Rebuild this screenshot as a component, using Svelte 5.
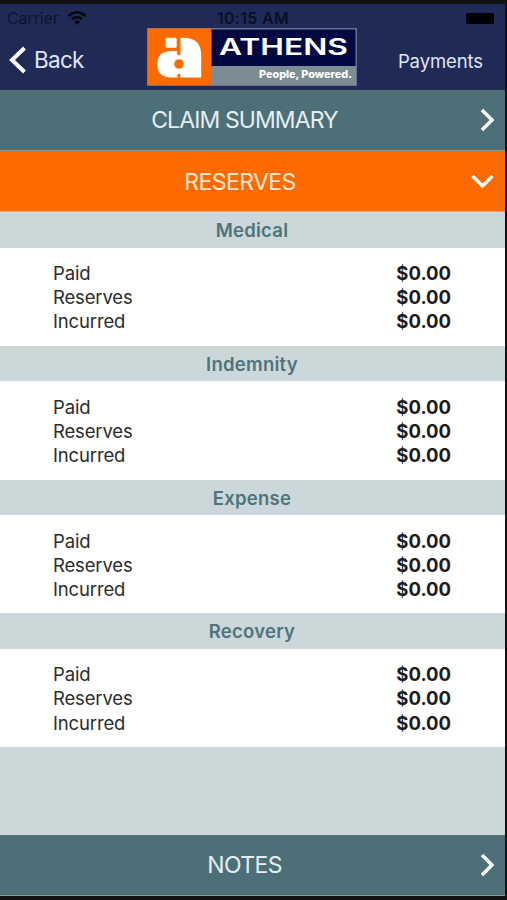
<script>
  const sections = ['Medical', 'Indemnity', 'Expense', 'Recovery'].map(title => ({
    title,
    rows: [
      { label: 'Paid', amount: 0 },
      { label: 'Reserves', amount: 0 },
      { label: 'Incurred', amount: 0 }
    ]
  }));

  let reservesOpen = $state(true);

  function money(value) {
    return '$' + value.toFixed(2);
  }
</script>

{#snippet chevronRight()}
  <svg class="chevron" width="14" height="24" viewBox="0 0 14 24">
    <path d="M2 2 L12 12 L2 22" />
  </svg>
{/snippet}

{#snippet chevronDown()}
  <svg class="chevron" width="23" height="14" viewBox="0 0 23 14">
    <path d="M1.5 2 L11.5 12 L21.5 2" />
  </svg>
{/snippet}

<div class="phone">
  <header>
    <div class="status">
      <div class="carrier">
        <span>Carrier</span>
        <svg width="20" height="14" viewBox="0 0 20 14">
          <path d="M1.5 5 Q10 -2.5 18.5 5" />
          <path d="M4.8 8.3 Q10 3.8 15.2 8.3" />
          <path class="dot" d="M7 10.8 Q10 8.3 13 10.8 L10 14 Z" />
        </svg>
      </div>
      <span class="time">10:15 AM</span>
      <span class="battery"></span>
    </div>

    <nav>
      <button class="back">
        <svg width="18" height="28" viewBox="0 0 18 28">
          <path d="M15.5 2 L3 14 L15.5 26" />
        </svg>
        <span>Back</span>
      </button>

      <svg class="logo" width="210" height="58" viewBox="0 0 210 58">
        <rect width="210" height="58" fill="#66718c" />
        <rect x="64" y="1.5" width="144.5" height="37" fill="#020840" />
        <rect x="64" y="38" width="145" height="19" fill="#7b8c94" />
        <rect x="0.5" y="0.5" width="64" height="56.5" fill="#fd6b00" />
        <rect x="18.7" y="9.7" width="11" height="10" rx="1.5" fill="#fff" />
        <path
          d="M33.5 9.7 H38 Q54 10.5 54.2 27 V49.5 H33.3 V46 H30.5 V49.5 H23 Q10.3 48.5 10.3 36.2 Q10.3 24 23 23 H30.2 V27 H33.5 Z"
        />
        <circle cx="32" cy="36" r="4.8" fill="#fd6b00" />
        <text class="brand" x="72" y="27" textLength="129" lengthAdjust="spacingAndGlyphs">ATHENS</text>
        <text class="tagline" x="112" y="50" textLength="93" lengthAdjust="spacingAndGlyphs">People, Powered.</text>
      </svg>

      <button class="payments">Payments</button>
    </nav>
  </header>

  <button class="bar">
    <span class="wide">CLAIM SUMMARY</span>
    {@render chevronRight()}
  </button>

  <button class="bar active" onclick={() => (reservesOpen = !reservesOpen)}>
    <span>RESERVES</span>
    {#if reservesOpen}
      {@render chevronDown()}
    {:else}
      {@render chevronRight()}
    {/if}
  </button>

  <main>
    {#if reservesOpen}
      {#each sections as section}
        <section>
          <h2>{section.title}</h2>
          <div class="rows">
            {#each section.rows as row}
              <div class="row">
                <span>{row.label}</span>
                <strong>{money(row.amount)}</strong>
              </div>
            {/each}
          </div>
        </section>
      {/each}
    {/if}
  </main>

  <button class="bar notes">
    <span>NOTES</span>
    {@render chevronRight()}
  </button>
</div>

<style>
  :global(body) {
    margin: 0;
    background: #111214;
  }

  .phone {
    box-sizing: border-box;
    width: 507px;
    height: 900px;
    padding: 4px 2px 4px 0;
    display: flex;
    flex-direction: column;
    background: #111214;
    font-family: Inter, 'Liberation Sans', sans-serif;
  }

  button {
    padding: 0;
    border: 0;
    background: none;
    color: inherit;
    font: inherit;
    cursor: pointer;
  }

  path {
    fill: none;
    stroke: #fff;
  }

  header {
    height: 86px;
    flex: none;
    background: #202a57;
    color: #dfe5f3;
  }

  .status {
    display: grid;
    grid-template-columns: 1fr auto 1fr;
    align-items: center;
    height: 24px;
    padding: 4px 11px 0 7px;
    box-sizing: border-box;
    color: #0e1434;
    font-size: 16px;
  }

  .carrier {
    display: flex;
    align-items: center;
    gap: 8px;
    letter-spacing: -0.1px;
  }

  .carrier path {
    stroke: #05070f;
    stroke-width: 2.6;
  }

  .carrier .dot {
    fill: #05070f;
    stroke: none;
  }

  .time {
    padding-left: 5px;
    color: #0a0f28;
    font-weight: 600;
    letter-spacing: 0.3px;
  }

  .battery {
    justify-self: end;
    width: 28px;
    height: 11px;
    border-radius: 2px;
    background: #000;
  }

  nav {
    display: grid;
    grid-template-columns: 147px 210px 1fr;
    align-items: start;
  }

  .back {
    display: flex;
    align-items: center;
    gap: 7px;
    padding: 16.5px 0 0 9px;
    font-size: 22.5px;
    letter-spacing: -0.7px;
    line-height: 30px;
  }

  .back path {
    stroke-width: 4;
  }

  .payments {
    justify-self: end;
    padding: 18px 22px 0 0;
    font-size: 18.5px;
    letter-spacing: -0.1px;
    line-height: 31px;
  }

  .logo path {
    stroke: none;
    fill: #fff;
  }

  .brand {
    fill: #fff;
    font-size: 22.5px;
    font-weight: 600;
  }

  .tagline {
    fill: #fff;
    font-size: 10.5px;
    font-weight: 800;
  }

  .bar {
    display: flex;
    align-items: center;
    flex: none;
    box-sizing: border-box;
    width: 100%;
    height: 61px;
    padding: 0 11px 0 9px;
    border-bottom: 1px solid #8c9896;
    background: #4d6f78;
    color: #e4eef3;
    font-size: 23px;
  }

  .bar span {
    flex: 1;
    letter-spacing: -0.6px;
    text-align: center;
  }

  .bar .wide {
    letter-spacing: -0.9px;
  }

  .bar.active {
    background: #fd6b00;
    border-bottom-color: #e8a06c;
    color: #ffe6d0;
  }

  .bar.active span {
    padding-top: 2px;
  }

  .chevron path {
    stroke-width: 3.4;
  }

  main {
    flex: 1;
    background: #ccd7d9;
  }

  section {
    height: 133.75px;
  }

  h2 {
    margin: 0;
    height: 35.5px;
    padding-right: 1px;
    color: #4d747c;
    font-size: 18.5px;
    font-weight: 600;
    letter-spacing: 0.25px;
    line-height: 37px;
    text-align: center;
  }

  .rows {
    box-sizing: border-box;
    height: 98.25px;
    padding: 13.5px 54px 0 53px;
    background: #fff;
    color: #2c2c2c;
    font-size: 18.5px;
  }

  .row {
    display: flex;
    justify-content: space-between;
    line-height: 24.2px;
  }

  .row span {
    letter-spacing: -0.15px;
  }

  strong {
    color: #1c1c1c;
    font-weight: 700;
  }
</style>
